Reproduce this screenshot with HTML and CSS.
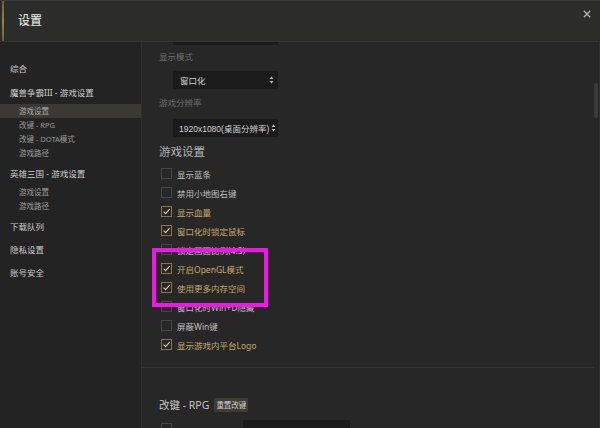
FILE: index.html
```html
<!DOCTYPE html>
<html lang="zh-CN">
<head>
<meta charset="utf-8">
<title>设置</title>
<link rel="stylesheet" href="styles.css">
</head>
<body>
<div class="window">
  <header class="header">
    <div class="accent"></div>
    <h1 class="title">设置</h1>
    <button class="close" aria-label="关闭">
      <svg width="8" height="8" viewBox="0 0 8 8"><path d="M0.8 0.8 L7.2 7.2 M7.2 0.8 L0.8 7.2" stroke="#b0b0b0" stroke-width="1.4" fill="none"/></svg>
    </button>
  </header>
  <div class="main">
    <nav class="sidebar">
      <div class="nav-item">综合</div>
      <div class="group">
        <div class="nav-item">魔兽争霸III - 游戏设置</div>
        <div class="sub active">游戏设置</div>
        <div class="sub">改键 - RPG</div>
        <div class="sub">改键 - DOTA模式</div>
        <div class="sub">游戏路径</div>
      </div>
      <div class="group">
        <div class="nav-item">英雄三国 - 游戏设置</div>
        <div class="sub">游戏设置</div>
        <div class="sub">游戏路径</div>
      </div>
      <div class="nav-item">下载队列</div>
      <div class="nav-item">隐私设置</div>
      <div class="nav-item">账号安全</div>
    </nav>
    <div class="content">
      <div class="scroll">
        <section class="section first">
          <div class="select partial"></div>
          <div class="field-label">显示模式</div>
          <div class="select"><span>窗口化</span><svg class="arrows" width="5" height="8" viewBox="0 0 5 8"><path d="M2.5 0.5 L4.5 3 L0.5 3 Z M2.5 7.5 L4.5 5 L0.5 5 Z" fill="#bdbdbd"/></svg></div>
          <div class="field-label second">游戏分辨率</div>
          <div class="select second"><span>1920x1080(桌面分辨率)</span><svg class="arrows" width="5" height="8" viewBox="0 0 5 8"><path d="M2.5 0.5 L4.5 3 L0.5 3 Z M2.5 7.5 L4.5 5 L0.5 5 Z" fill="#bdbdbd"/></svg></div>
          <h2 class="heading">游戏设置</h2>
          <div class="checklist">
            <label class="check"><span class="box"></span><span class="text">显示蓝条</span></label>
            <label class="check"><span class="box"></span><span class="text">禁用小地图右键</span></label>
            <label class="check on"><span class="box"><svg width="9" height="9" viewBox="0 0 9 9"><path d="M1.6 4.6 L3.6 6.6 L7.6 2.2" stroke="#d6cdbb" stroke-width="1.1" fill="none"/></svg></span><span class="text">显示血量</span></label>
            <label class="check on"><span class="box"><svg width="9" height="9" viewBox="0 0 9 9"><path d="M1.6 4.6 L3.6 6.6 L7.6 2.2" stroke="#d6cdbb" stroke-width="1.1" fill="none"/></svg></span><span class="text">窗口化时锁定鼠标</span></label>
            <label class="check"><span class="box"></span><span class="text">锁定画面比例(4:3)</span></label>
            <label class="check on"><span class="box"><svg width="9" height="9" viewBox="0 0 9 9"><path d="M1.6 4.6 L3.6 6.6 L7.6 2.2" stroke="#d6cdbb" stroke-width="1.1" fill="none"/></svg></span><span class="text">开启OpenGL模式</span></label>
            <label class="check on"><span class="box"><svg width="9" height="9" viewBox="0 0 9 9"><path d="M1.6 4.6 L3.6 6.6 L7.6 2.2" stroke="#d6cdbb" stroke-width="1.1" fill="none"/></svg></span><span class="text">使用更多内存空间</span></label>
            <label class="check"><span class="box"></span><span class="text">窗口化时Win+D隐藏</span></label>
            <label class="check"><span class="box"></span><span class="text">屏蔽Win键</span></label>
            <label class="check on"><span class="box"><svg width="9" height="9" viewBox="0 0 9 9"><path d="M1.6 4.6 L3.6 6.6 L7.6 2.2" stroke="#d6cdbb" stroke-width="1.1" fill="none"/></svg></span><span class="text">显示游戏内平台Logo</span></label>
            <div class="highlight"></div>
          </div>
        </section>
        <section class="section rpg">
          <h2 class="heading2">改键 - RPG <span class="reset">重置改键</span></h2>
          <div class="key-row">
            <span class="box"></span>
            <span class="key-field"></span>
          </div>
        </section>
      </div>
      <div class="track"><div class="thumb"></div></div>
    </div>
  </div>
</div>
</body>
</html>
```

FILE: styles.css
```css
* { box-sizing: border-box; }
html, body {
  margin: 0;
  padding: 0;
  background: #262626;
}
body {
  font-family: "Noto Sans", "Noto Sans CJK SC", sans-serif;
  width: 600px;
  height: 428px;
  overflow: hidden;
}
.window {
  width: 600px;
  height: 428px;
  display: flex;
  flex-direction: column;
  background: #272727;
}
.header {
  height: 42px;
  flex: none;
  display: flex;
  align-items: center;
  background: #2c2c2a;
  border-top: 1px solid #3a3a38;
  border-bottom: 1px solid #343432;
}
.accent {
  width: 2px;
  height: 40px;
  margin-left: 2px;
  align-self: flex-start;
  background: linear-gradient(#6f5d35, #9a8048 50%, #6f5d35);
}
.title {
  margin: 0 0 0 14px;
  font-size: 12px;
  font-weight: 500;
  color: #dedede;
  line-height: 16px;
}
.close {
  margin-left: auto;
  margin-right: 8px;
  align-self: flex-start;
  margin-top: 8px;
  width: 10px;
  height: 10px;
  padding: 0;
  border: 0;
  background: transparent;
  display: flex;
  align-items: center;
  justify-content: center;
}
.main {
  flex: 1;
  display: flex;
  min-height: 0;
}
.sidebar {
  width: 142px;
  flex: none;
  background: #232323;
  border-right: 1px solid #2f2f2f;
  padding-top: 15px;
}
.nav-item {
  line-height: 23px;
  height: 23px;
  font-size: 8.5px;
  color: #cdcdcd;
  padding-left: 10px;
  white-space: nowrap;
}
.group { margin-top: 1px; }
.group + .group, .group + .nav-item { margin-top: 2px; }
.sub {
  line-height: 14px;
  height: 14px;
  font-size: 7.5px;
  color: #9c9c9c;
  padding-left: 19px;
  white-space: nowrap;
}
.sub.active {
  background: #3a3935;
  color: #a9a9a9;
}
.content {
  flex: 1;
  display: flex;
  min-width: 0;
  background: #272727;
}
.scroll {
  flex: 1;
  overflow: hidden;
}
.track {
  width: 6px;
  flex: none;
  border-right: 1px solid #323232;
}
.thumb {
  width: 4px;
  height: 35px;
  margin-top: 41px;
  background: #3a3a3a;
  border-radius: 2px;
}
.section {
  padding-left: 17px;
}
.select {
  width: 105px;
  height: 18px;
  margin-left: 14px;
  background: #1b1b1b;
  display: flex;
  align-items: center;
  justify-content: space-between;
  padding: 0 4px 0 7px;
  font-family: "Liberation Sans", "Noto Sans CJK SC", sans-serif;
  font-size: 8.5px;
  color: #d2d2d2;
  margin-top: 7px;
  white-space: nowrap;
}
.select.partial { margin-top: -15px; }
.select.second { margin-top: 9px; padding-left: 6px; }
.arrows { flex: none; margin-left: 2px; }
.field-label {
  margin-top: 5px;
  line-height: 14px;
  font-size: 8.5px;
  color: #6e6e6e;
}
.field-label.second { margin-top: 7px; }
.heading {
  margin: 7px 0 0 0;
  font-size: 11.5px;
  font-weight: normal;
  line-height: 16px;
  color: #b4b4b4;
}
.checklist {
  position: relative;
  margin-top: 4px;
  padding-bottom: 13px;
}
.check {
  display: flex;
  align-items: center;
  height: 19px;
  font-size: 8.5px;
  color: #bfbfbf;
}
.check.on { color: #c8a76b; }
.box {
  width: 11px;
  height: 11px;
  margin-left: 2px;
  border: 1px solid #474747;
  display: flex;
  align-items: center;
  justify-content: center;
  flex: none;
}
.check.on .box { border-color: #8a7548; }
.text {
  margin-left: 5px;
  white-space: nowrap;
}
.highlight {
  position: absolute;
  left: -7px;
  top: 84px;
  width: 116px;
  height: 59px;
  border: 4px solid #f215e8;
}
.rpg {
  border-top: 1px solid #333333;
  padding-top: 29px;
}
.heading2 {
  margin: 0;
  font-size: 10.5px;
  font-weight: normal;
  line-height: 16px;
  color: #c6c6c6;
  display: flex;
  align-items: center;
}
.reset {
  margin-left: 5px;
  height: 14px;
  line-height: 14px;
  padding: 0 2px;
  font-size: 7.5px;
  background: #3e3c35;
  color: #cfcfcf;
  border-radius: 1px;
}
.key-row {
  display: flex;
  align-items: flex-start;
  margin-top: 7px;
}
.key-row .box { margin-top: 3px; }
.key-field {
  width: 107px;
  height: 18px;
  margin-left: 71px;
  background: #1b1b1b;
}
```
